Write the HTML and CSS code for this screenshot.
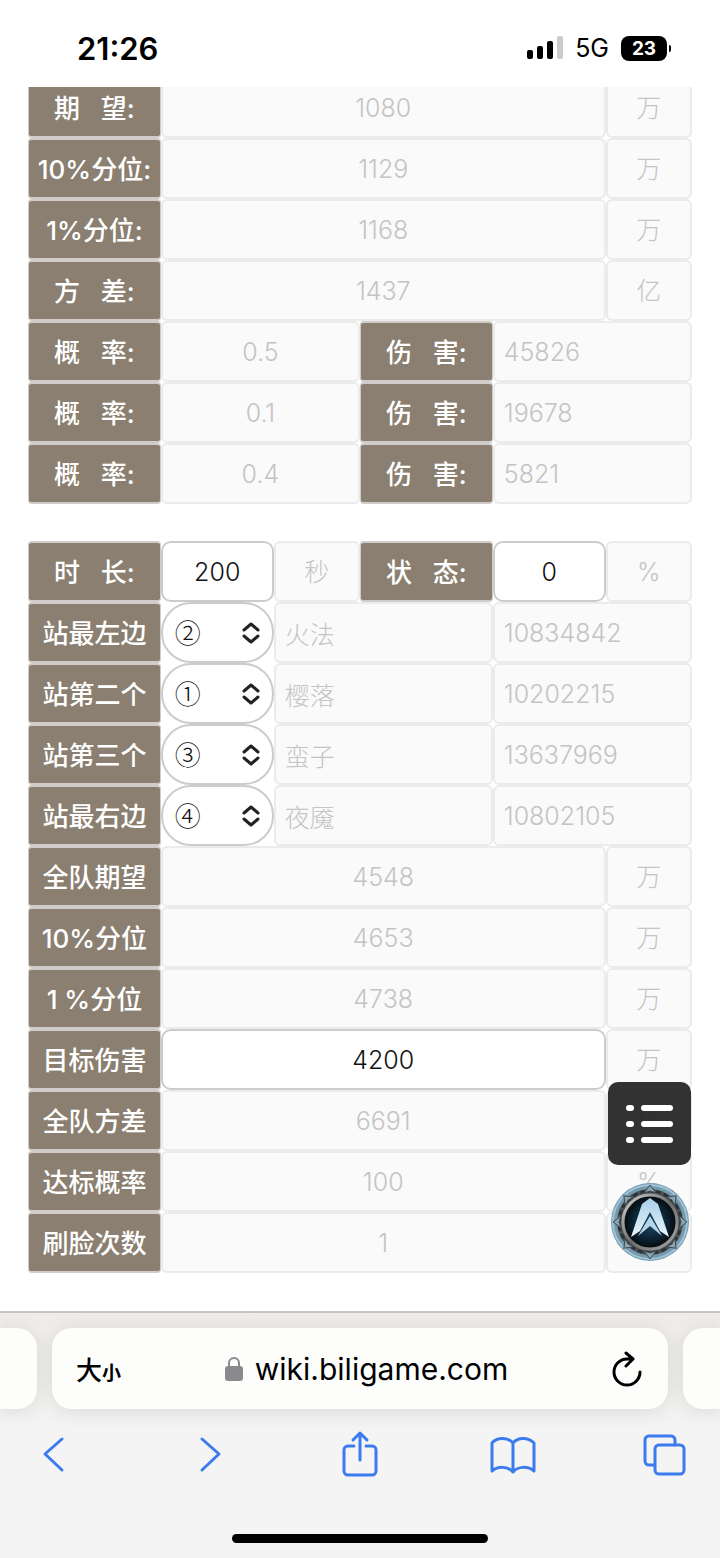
FILE: index.html
```html
<!DOCTYPE html>
<html lang="zh-CN">
<head>
    <meta charset="UTF-8">
    <meta name="viewport" content="width=device-width, initial-scale=1.0">
    <title>wiki.biligame.com</title>
    <link rel="stylesheet" href="styles.css">
</head>
<body>
    <header class="status-bar">
        <span class="time">21:26</span>
        <div class="status-right">
            <svg class="signal" viewBox="0 0 36 24" aria-hidden="true">
                <rect x="0" y="14" width="6" height="9" rx="2"/>
                <rect x="10" y="10" width="6" height="13" rx="2"/>
                <rect x="20" y="5" width="6" height="18" rx="2"/>
                <rect x="30" y="0" width="6" height="23" rx="2" fill="#ccc"/>
            </svg>
            <span class="network">5G</span>
            <span class="battery">23</span>
        </div>
    </header>

    <main class="page">
        <form class="calc">
            <!-- Single character result -->
            <section class="group">
                <label class="name" for="mean">期&nbsp;&nbsp; 望:</label>
                <input class="wide" id="mean" value="1080" disabled>
                <span class="unit">万</span>

                <label class="name" for="p10">10%分位:</label>
                <input class="wide" id="p10" value="1129" disabled>
                <span class="unit">万</span>

                <label class="name" for="p1">1%分位:</label>
                <input class="wide" id="p1" value="1168" disabled>
                <span class="unit">万</span>

                <label class="name" for="variance">方&nbsp;&nbsp; 差:</label>
                <input class="wide" id="variance" value="1437" disabled>
                <span class="unit">亿</span>

                <label class="name" for="rate1">概&nbsp;&nbsp; 率:</label>
                <input class="double" id="rate1" value="0.5" disabled>
                <label class="name" for="damage1">伤&nbsp;&nbsp; 害:</label>
                <input class="double left" id="damage1" value="45826" disabled>

                <label class="name" for="rate2">概&nbsp;&nbsp; 率:</label>
                <input class="double" id="rate2" value="0.1" disabled>
                <label class="name" for="damage2">伤&nbsp;&nbsp; 害:</label>
                <input class="double left" id="damage2" value="19678" disabled>

                <label class="name" for="rate3">概&nbsp;&nbsp; 率:</label>
                <input class="double" id="rate3" value="0.4" disabled>
                <label class="name" for="damage3">伤&nbsp;&nbsp; 害:</label>
                <input class="double left" id="damage3" value="5821" disabled>
            </section>

            <!-- Whole team -->
            <section class="group">
                <label class="name" for="duration">时&nbsp;&nbsp; 长:</label>
                <input id="duration" value="200">
                <span class="unit">秒</span>
                <label class="name" for="state">状&nbsp;&nbsp; 态:</label>
                <input id="state" value="0">
                <span class="unit">%</span>

                <label class="name" for="pos1">站最左边</label>
                <div class="picker">
                    <select id="pos1"><option>①</option><option selected>②</option><option>③</option><option>④</option></select>
                    <svg viewBox="0 0 18 20" aria-hidden="true"><path d="M2 7l7-6 7 6M2 13l7 6 7-6"/></svg>
                </div>
                <input class="double left" value="火法" aria-label="角色" disabled>
                <input class="double left" value="10834842" aria-label="伤害" disabled>

                <label class="name" for="pos2">站第二个</label>
                <div class="picker">
                    <select id="pos2"><option selected>①</option><option>②</option><option>③</option><option>④</option></select>
                    <svg viewBox="0 0 18 20" aria-hidden="true"><path d="M2 7l7-6 7 6M2 13l7 6 7-6"/></svg>
                </div>
                <input class="double left" value="樱落" aria-label="角色" disabled>
                <input class="double left" value="10202215" aria-label="伤害" disabled>

                <label class="name" for="pos3">站第三个</label>
                <div class="picker">
                    <select id="pos3"><option>①</option><option>②</option><option selected>③</option><option>④</option></select>
                    <svg viewBox="0 0 18 20" aria-hidden="true"><path d="M2 7l7-6 7 6M2 13l7 6 7-6"/></svg>
                </div>
                <input class="double left" value="蛮子" aria-label="角色" disabled>
                <input class="double left" value="13637969" aria-label="伤害" disabled>

                <label class="name" for="pos4">站最右边</label>
                <div class="picker">
                    <select id="pos4"><option>①</option><option>②</option><option>③</option><option selected>④</option></select>
                    <svg viewBox="0 0 18 20" aria-hidden="true"><path d="M2 7l7-6 7 6M2 13l7 6 7-6"/></svg>
                </div>
                <input class="double left" value="夜魇" aria-label="角色" disabled>
                <input class="double left" value="10802105" aria-label="伤害" disabled>

                <label class="name" for="teamMean">全队期望</label>
                <input class="wide" id="teamMean" value="4548" disabled>
                <span class="unit">万</span>

                <label class="name" for="teamP10">10%分位</label>
                <input class="wide" id="teamP10" value="4653" disabled>
                <span class="unit">万</span>

                <label class="name" for="teamP1">1 %分位</label>
                <input class="wide" id="teamP1" value="4738" disabled>
                <span class="unit">万</span>

                <label class="name" for="target">目标伤害</label>
                <input class="wide" id="target" value="4200">
                <span class="unit">万</span>

                <label class="name" for="teamVariance">全队方差</label>
                <input class="wide" id="teamVariance" value="6691" disabled>
                <span class="unit">亿</span>

                <label class="name" for="reach">达标概率</label>
                <input class="wide" id="reach" value="100" disabled>
                <span class="unit">%</span>

                <label class="name" for="tries">刷脸次数</label>
                <input class="wide" id="tries" value="1" disabled>
                <span class="unit"></span>
            </section>
        </form>

        <div class="floating">
            <button type="button" class="menu-btn" aria-label="目录">
                <svg viewBox="0 0 83 83" aria-hidden="true">
                    <g stroke="#fff" stroke-width="6" stroke-linecap="round">
                        <path d="M21 26h2M36 26h26M21 42h2M36 42h26M21 58h2M36 58h26"/>
                    </g>
                </svg>
            </button>
            <button type="button" class="top-btn" aria-label="返回顶部">
                <svg viewBox="0 0 80 80" aria-hidden="true">
                    <defs>
                        <radialGradient id="core">
                            <stop offset="0" stop-color="#1d4b68"/>
                            <stop offset="0.6" stop-color="#0d2637"/>
                            <stop offset="1" stop-color="#05080b"/>
                        </radialGradient>
                        <linearGradient id="metal" x1="0" y1="0" x2="1" y2="1">
                            <stop offset="0" stop-color="#d6d6d4"/>
                            <stop offset="0.5" stop-color="#6e6c69"/>
                            <stop offset="1" stop-color="#a9a8a5"/>
                        </linearGradient>
                        <linearGradient id="blade" x1="0" y1="0" x2="0" y2="1">
                            <stop offset="0" stop-color="#a9cfe9"/>
                            <stop offset="1" stop-color="#e9f5fc"/>
                        </linearGradient>
                    </defs>
                    <circle cx="40" cy="40" r="39" fill="#7699ae"/>
                    <circle cx="40" cy="40" r="37" fill="none" stroke="#9fc3d8" stroke-width="2"/>
                    <circle cx="40" cy="40" r="33" fill="#4b5358"/>
                    <circle cx="40" cy="40" r="31" fill="none" stroke="#2b3337" stroke-width="3" stroke-dasharray="5 3"/>
                    <g fill="#8fa4ae" stroke="#3d4a52">
                        <path id="spike" d="M40 3l6 8-6-2-6 2z"/>
                        <use href="#spike" transform="rotate(45 40 40)"/>
                        <use href="#spike" transform="rotate(90 40 40)"/>
                        <use href="#spike" transform="rotate(135 40 40)"/>
                        <use href="#spike" transform="rotate(180 40 40)"/>
                        <use href="#spike" transform="rotate(225 40 40)"/>
                        <use href="#spike" transform="rotate(270 40 40)"/>
                        <use href="#spike" transform="rotate(315 40 40)"/>
                    </g>
                    <circle cx="40" cy="40" r="27" fill="url(#core)" stroke="url(#metal)" stroke-width="3"/>
                    <path d="M40 16l-8 6L21 55l9-6 10-19 10 19 9 6L48 22z" fill="url(#blade)"/>
                    <path d="M40 34L28 54l12-10 12 10z" fill="#b5d6ea"/>
                </svg>
            </button>
        </div>
    </main>

    <footer class="browser-bar">
        <div class="tabs">
            <div class="tab side-left"></div>
            <div class="tab address">
                <button type="button" class="text-size" aria-label="大小">大<small>小</small></button>
                <a class="url" href="#">
                    <svg viewBox="0 0 18 25" aria-hidden="true">
                        <rect x="0" y="10" width="18" height="15" rx="3" fill="#8a8a8e"/>
                        <path d="M4 11V7a5 5 0 0 1 10 0v4" fill="none" stroke="#8a8a8e" stroke-width="2"/>
                    </svg>
                    wiki.biligame.com
                </a>
                <button type="button" class="reload" aria-label="刷新">
                    <svg viewBox="0 0 30 36" aria-hidden="true">
                        <path d="M15 8A13 13 0 1 0 28 21M14 2l7 6-7 7M15 8h5"/>
                    </svg>
                </button>
            </div>
            <div class="tab side-right"></div>
        </div>

        <nav class="toolbar">
            <button type="button" aria-label="后退"><svg viewBox="0 0 48 48"><path d="M32 9L15 24l17 16"/></svg></button>
            <button type="button" aria-label="前进"><svg viewBox="0 0 48 48"><path d="M19 9l17 15-17 16"/></svg></button>
            <button type="button" aria-label="分享"><svg viewBox="0 0 48 48"><path d="M19 16h-6a4 4 0 0 0-4 4v21a4 4 0 0 0 4 4h24a4 4 0 0 0 4-4V20a4 4 0 0 0-4-4h-6M25 30V3M18 10l7-7 7 7"/></svg></button>
            <button type="button" aria-label="书签"><svg viewBox="0 0 48 48"><path d="M25 13C20 7 9 7 4 13v28c6-5 16-5 21 1 5-6 15-6 21-1V13C40 7 30 7 25 13zv29"/></svg></button>
            <button type="button" aria-label="标签页"><svg viewBox="0 0 48 48"><rect x="15" y="15" width="29" height="29" rx="4"/><path d="M14 35H9a4 4 0 0 1-4-4V10a4 4 0 0 1 4-4h22a4 4 0 0 1 4 4v5"/></svg></button>
        </nav>

        <div class="home-indicator"></div>
    </footer>
</body>
</html>
```

FILE: styles.css
```css
* {
    box-sizing: border-box;
}

body {
    margin: 0;
    height: 100vh;
    display: flex;
    flex-direction: column;
    background: #fff;
    color: #000;
    font-family: Inter, "Noto Sans CJK SC", sans-serif;
}

button {
    border: none;
    padding: 0;
    background: none;
    color: inherit;
    font-family: inherit;
    cursor: pointer;
}

svg {
    display: block;
}

/* Status bar */
.status-bar {
    flex: none;
    height: 87px;
    padding: 9px 49px 0 77px;
    display: flex;
    justify-content: space-between;
    align-items: center;
}

.time {
    font-size: 31px;
    font-weight: 600;
}

.status-right {
    display: flex;
    align-items: center;
    gap: 12px;
}

.signal {
    width: 36px;
    height: 24px;
}

.network {
    font-size: 25px;
    font-weight: 400;
}

.battery {
    position: relative;
    width: 46px;
    height: 25px;
    margin-right: 4px;
    border-radius: 8px;
    background: #000;
    color: #fff;
    font-size: 19px;
    font-weight: 700;
    line-height: 25px;
    text-align: center;
}

.battery::after {
    content: "";
    position: absolute;
    right: -4px;
    top: 9px;
    width: 2px;
    height: 7px;
    border-radius: 0 2px 2px 0;
    background: #000;
}

/* Calculator, the page stays scrolled to its end */
.page {
    position: relative;
    flex: 1;
    min-height: 0;
    padding: 0 28px 38px;
    display: flex;
    flex-direction: column;
    justify-content: flex-end;
    overflow: hidden;
}

.calc {
    display: flex;
    flex-direction: column;
    gap: 37px;
}

.group {
    display: grid;
    grid-template-columns: 20fr 17fr 13fr 20fr 17fr 13fr;
    grid-auto-rows: 61px;
}

.name {
    border: 2px solid #cfccc9;
    border-width: 2px 1px;
    border-radius: 4px;
    background: #8a7f70;
    color: #fff;
    font-size: 26px;
    font-weight: 500;
    line-height: 60px;
    text-align: center;
    white-space: nowrap;
}

.group input,
.group select,
.unit {
    width: 100%;
    min-width: 0;
    height: 61px;
    margin: 0;
    padding: 1px 9px 0;
    border: 2px solid #ccc;
    border-radius: 10px;
    background: #fff;
    color: #111;
    font-family: inherit;
    font-size: 25px;
    font-weight: 300;
    text-align: center;
}

.group input:disabled,
.unit {
    border-color: #ebebeb;
    border-radius: 6px;
    background: #fafafa;
    color: #c4c4c4;
}

.unit {
    line-height: 57px;
}

.group .wide {
    grid-column: span 4;
}

.group .double {
    grid-column: span 2;
}

.group .left {
    text-align: left;
}

.picker {
    position: relative;
}

.group select {
    appearance: none;
    padding: 0 12px 3px;
    border-radius: 30px;
    font-family: "Noto Sans CJK SC", sans-serif;
    font-size: 26px;
    text-align: left;
}

.picker svg {
    position: absolute;
    right: 14px;
    top: 21px;
    width: 18px;
    height: 20px;
    fill: none;
    stroke: #222;
    stroke-width: 3;
    stroke-linecap: round;
    stroke-linejoin: round;
    overflow: visible;
    pointer-events: none;
}

/* Buttons over the page */
.floating {
    position: absolute;
    right: 29px;
    bottom: 49px;
    display: flex;
    flex-direction: column;
    align-items: center;
    gap: 17px;
}

.menu-btn {
    width: 83px;
    height: 83px;
    border-radius: 10px;
    background: rgba(34, 34, 34, 0.93);
}

.top-btn {
    width: 80px;
    height: 80px;
    border-radius: 50%;
}

/* Browser bar */
.browser-bar {
    flex: none;
    border-top: 2px solid #c4c4c4;
    background: linear-gradient(#efece8, #f4f4f4 50%);
    overflow: hidden;
}

.tabs {
    display: flex;
    gap: 15px;
    padding-top: 15px;
}

.tab {
    height: 81px;
    flex: 0 0 37px;
    background: #fdfdfc;
    box-shadow: 0 2px 20px rgba(0, 0, 0, 0.1);
}

.side-left {
    border-radius: 0 20px 20px 0;
}

.side-right {
    border-radius: 20px 0 0 20px;
}

.address {
    flex: 1;
    padding: 0 26px 0 24px;
    border-radius: 20px;
    display: flex;
    justify-content: space-between;
    align-items: center;
}

.text-size {
    font-size: 26px;
    font-weight: 500;
}

.text-size small {
    font-size: 19px;
    font-weight: 700;
}

.url {
    display: flex;
    align-items: center;
    gap: 12px;
    color: #000;
    font-size: 30px;
    text-decoration: none;
}

.url svg {
    width: 18px;
    height: 25px;
}

.reload svg {
    width: 30px;
    height: 36px;
    fill: none;
    stroke: #000;
    stroke-width: 3;
    stroke-linecap: round;
    stroke-linejoin: round;
}

.toolbar {
    display: flex;
    justify-content: space-between;
    padding: 21px 32px 0 30px;
}

.toolbar svg {
    width: 48px;
    height: 48px;
    fill: none;
    stroke: #3b7bee;
    stroke-width: 3;
    stroke-linecap: round;
    stroke-linejoin: round;
}

.home-indicator {
    width: 256px;
    height: 9px;
    margin: 56px auto 15px;
    border-radius: 5px;
    background: #000;
}
```
